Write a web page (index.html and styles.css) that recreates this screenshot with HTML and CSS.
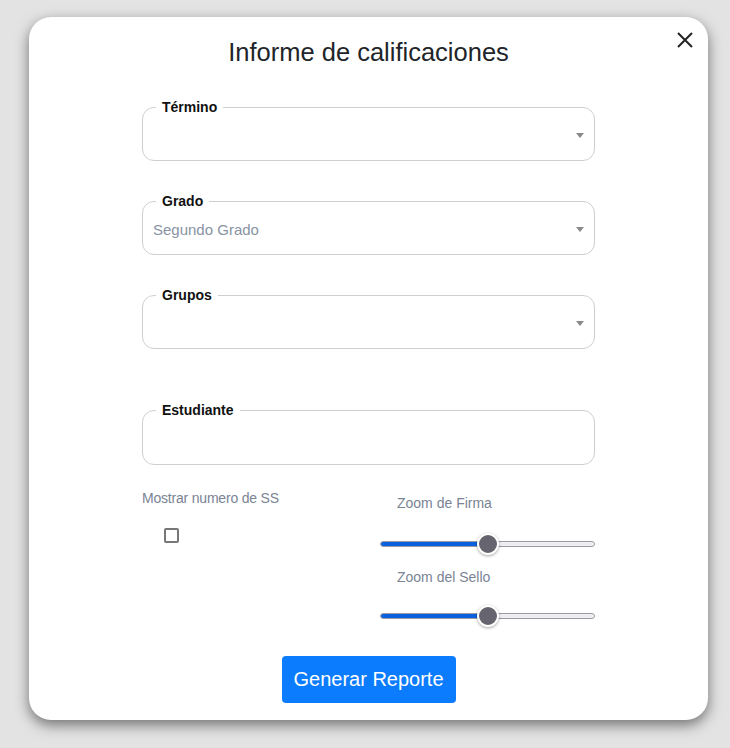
FILE: index.html
```html
<!DOCTYPE html>
<html lang="es">
<head>
<meta charset="utf-8">
<title>Informe de calificaciones</title>
<link rel="stylesheet" href="styles.css">
</head>
<body>
<div class="backdrop">
  <div class="modal">
    <button class="close" aria-label="Cerrar">
      <svg width="16" height="16" viewBox="0 0 16 16"><path d="M1 1L15 15M15 1L1 15" stroke="#222" stroke-width="2" fill="none"/></svg>
    </button>
    <h2 class="title">Informe de calificaciones</h2>
    <form class="form">
      <fieldset class="field">
        <legend>Término</legend>
        <div class="select"><span class="value"></span><span class="arrow"></span></div>
      </fieldset>
      <fieldset class="field">
        <legend>Grado</legend>
        <div class="select"><span class="value">Segundo Grado</span><span class="arrow"></span></div>
      </fieldset>
      <fieldset class="field field-groups">
        <legend>Grupos</legend>
        <div class="select"><span class="value"></span><span class="arrow"></span></div>
      </fieldset>
      <fieldset class="field field-student">
        <legend>Estudiante</legend>
        <div class="input"></div>
      </fieldset>
      <div class="options">
        <div class="opt-left">
          <div class="opt-label">Mostrar numero de SS</div>
          <span class="checkbox"></span>
        </div>
        <div class="opt-right">
          <div class="zoom-label">Zoom de Firma</div>
          <div class="slider"><div class="track"><div class="fill" style="width:50%"></div></div><span class="thumb" style="left:50%"></span></div>
          <div class="zoom-label second">Zoom del Sello</div>
          <div class="slider slider2"><div class="track"><div class="fill" style="width:50%"></div></div><span class="thumb" style="left:50%"></span></div>
        </div>
      </div>
      <div class="actions">
        <button type="button" class="btn">Generar Reporte</button>
      </div>
    </form>
  </div>
</div>
</body>
</html>
```
FILE: styles.css
```css
* { box-sizing: border-box; }
html, body { margin: 0; padding: 0; }
body {
  background: #e3e3e3;
  font-family: "Liberation Sans", Arial, sans-serif;
  width: 730px;
  height: 748px;
  overflow: hidden;
}
.backdrop {
  padding: 17px 0 0 29px;
}
.modal {
  position: relative;
  width: 679px;
  height: 703px;
  background: #fff;
  border-radius: 22px;
  box-shadow: 0 5px 14px rgba(0,0,0,0.5);
  padding: 20px 0 17px;
}
.close {
  position: absolute;
  top: 15px;
  right: 15px;
  width: 16px;
  height: 16px;
  padding: 0;
  border: 0;
  background: none;
  display: flex;
}
.title {
  margin: 0;
  text-align: center;
  font-size: 25.5px;
  line-height: 30px;
  font-weight: 400;
  color: #212529;
}
.form {
  width: 453px;
  margin: 32px auto 0;
}
.field {
  margin: 0 0 32px;
  padding: 0 10px;
  border: 1px solid #cfcfcf;
  border-radius: 12px;
  min-width: 0;
}
.field legend {
  margin-left: 3px;
  padding: 0 6px;
  font-size: 14px;
  line-height: 16px;
  font-weight: 700;
  color: #111;
}
.select {
  height: 45px;
  padding-bottom: 4px;
  display: flex;
  align-items: center;
  justify-content: space-between;
}
.value {
  font-size: 15px;
  color: #8893a3;
}
.arrow {
  width: 0;
  height: 0;
  border-left: 4px solid transparent;
  border-right: 4px solid transparent;
  border-top: 5px solid #8a8a8a;
}
.field-groups { margin-bottom: 53px; }
.field-student { margin-bottom: 25px; }
.input { height: 46px; }
.options {
  display: grid;
  grid-template-columns: 1fr 215px;
}
.opt-label {
  font-size: 14px;
  line-height: 16px;
  color: #7a8494;
  letter-spacing: -0.2px;
}
.checkbox {
  display: block;
  width: 15px;
  height: 15px;
  margin: 22px 0 0 22px;
  border: 2px solid #777;
  border-radius: 2px;
}
.opt-right { padding-top: 5px; }
.zoom-label {
  padding-left: 17px;
  font-size: 14px;
  line-height: 16px;
  color: #7a8494;
}
.zoom-label.second { margin-top: 15px; }
.slider {
  position: relative;
  height: 20px;
  margin-top: 23px;
  display: flex;
  align-items: center;
}
.slider2 { margin-top: 21px; }
.track {
  width: 100%;
  height: 6px;
  border-radius: 3px;
  background: #efeff1;
  border: 1px solid #9b9ba6;
  overflow: hidden;
}
.fill {
  height: 100%;
  background: #0b61dd;
}
.thumb {
  position: absolute;
  top: 50%;
  width: 22px;
  height: 22px;
  margin: -11px 0 0 -11px;
  border-radius: 50%;
  background: #65646f;
  border: 2px solid #fff;
  box-shadow: 0 1px 3px rgba(0,0,0,0.35);
}
.actions {
  display: flex;
  justify-content: center;
  margin-top: 30px;
}
.btn {
  width: 174px;
  height: 47px;
  border: 0;
  border-radius: 4px;
  background: #0c7cfe;
  color: #fff;
  font-family: "Liberation Sans", Arial, sans-serif;
  font-size: 20px;
}
```
